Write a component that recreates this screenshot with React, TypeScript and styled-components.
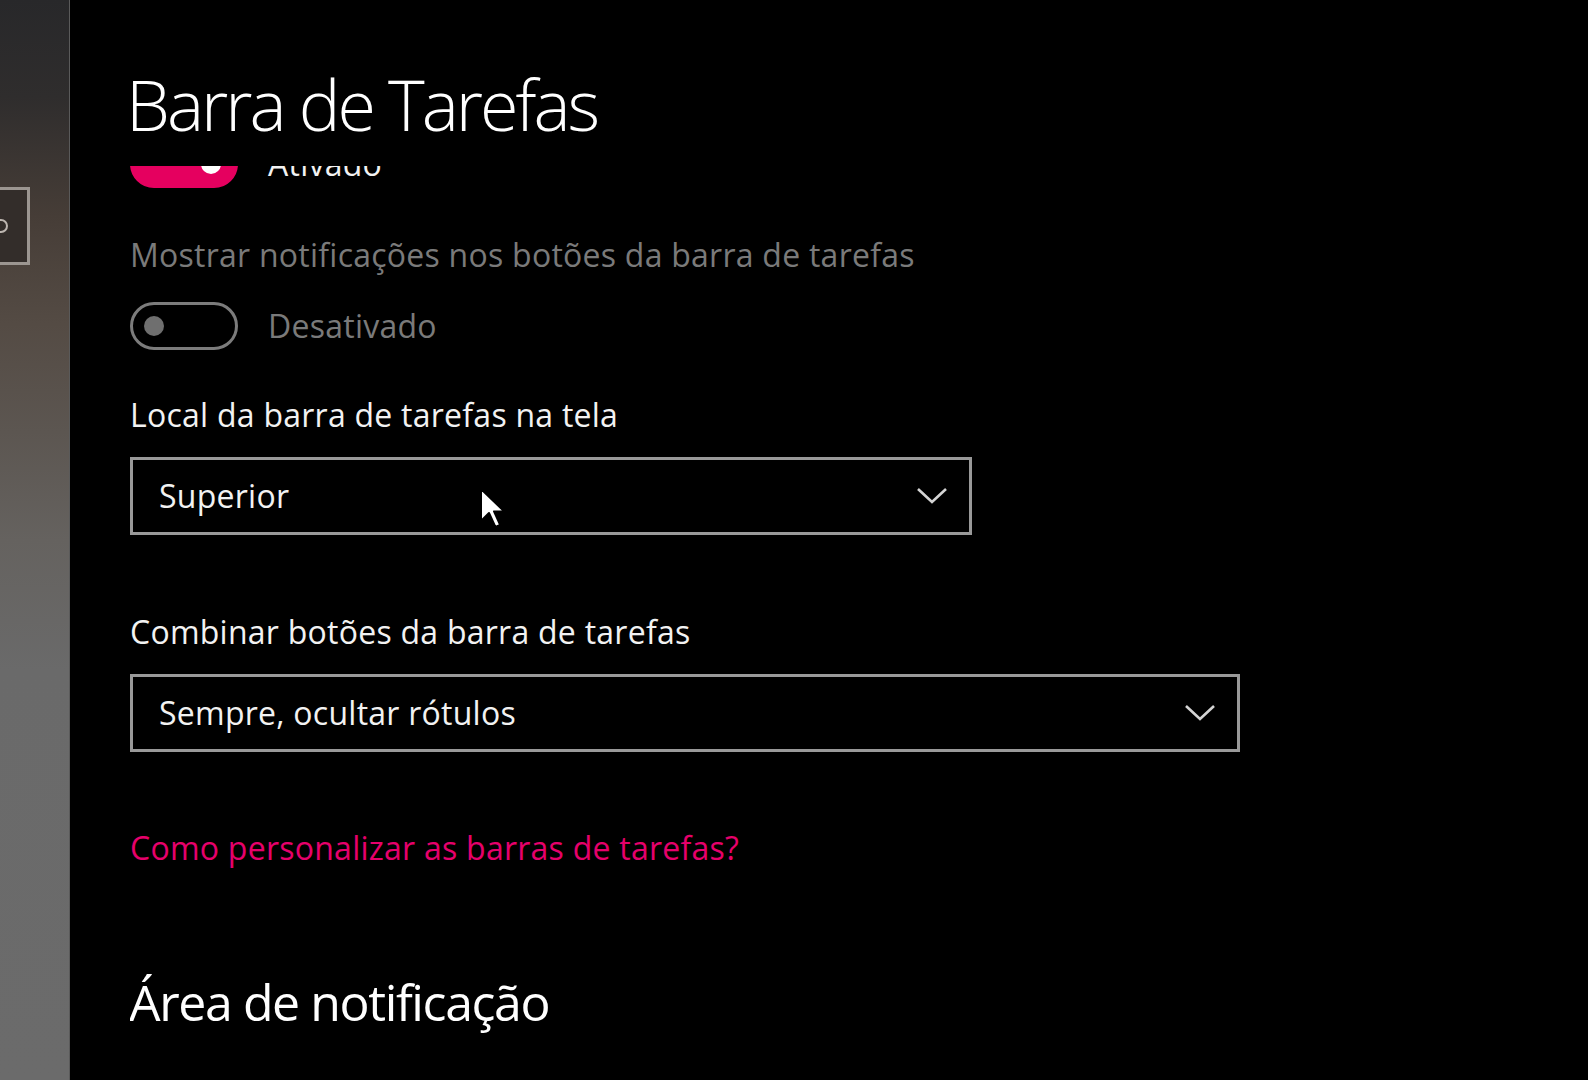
import React, { FC } from 'react';
import styled, { createGlobalStyle } from 'styled-components';

const GlobalStyle = createGlobalStyle`
  html, body {
    margin: 0;
    padding: 0;
    background: #000;
  }
  body {
    font-family: 'Open Sans', 'Noto Sans', sans-serif;
    color: #fff;
  }
`;

const PINK = '#e5005f';

const Page = styled.div`
  display: flex;
  width: 1588px;
  height: 1080px;
  overflow: hidden;
  background: #000;
`;

const Backdrop = styled.aside`
  width: 69px;
  flex-shrink: 0;
  display: flex;
  flex-direction: column;
  background: linear-gradient(
    180deg,
    #28282a 0%,
    #2f2d2d 9%,
    #463d37 20%,
    #544b44 30%,
    #5c5651 40%,
    #65625f 50%,
    #6a6a6a 62%,
    #6b6b6b 100%
  );
  border-right: 1px solid #5a5a5a;
`;

const SearchBox = styled.div`
  margin-top: 187px;
  margin-left: -40px;
  width: 70px;
  height: 78px;
  box-sizing: border-box;
  border: 3px solid #9c9691;
  background: #332d2a;
  display: flex;
  align-items: center;
  padding-left: 31px;
`;

const SearchGlyph = styled.span`
  width: 14px;
  height: 14px;
  box-sizing: border-box;
  border: 2px solid #bdb6b0;
  border-radius: 50%;
`;

const Main = styled.main`
  flex: 1;
  display: flex;
  flex-direction: column;
  padding-left: 60px;
  min-width: 0;
`;

const Header = styled.header`
  height: 166px;
  box-sizing: border-box;
  padding-top: 69px;
  flex-shrink: 0;
`;

const Title = styled.h1`
  margin: 0 0 0 -4px;
  font-size: 70px;
  line-height: 70px;
  font-weight: 300;
  letter-spacing: -3px;
  color: #fff;
`;

const Viewport = styled.div`
  flex: 1;
  overflow: hidden;
`;

// the list is scrolled a little, so the first switch slides under the header
const Scrolled = styled.div`
  margin-top: -26px;
  display: flex;
  flex-direction: column;
  align-items: flex-start;
`;

const Row = styled.div<{ $gap?: number }>`
  display: flex;
  align-items: center;
  gap: 30px;
  margin-top: ${(p) => p.$gap ?? 0}px;
`;

const Switch = styled.div<{ $on?: boolean }>`
  width: 108px;
  height: 48px;
  box-sizing: border-box;
  border-radius: 24px;
  display: flex;
  align-items: center;
  padding: 0 ${(p) => (p.$on ? 14 : 11)}px;
  justify-content: ${(p) => (p.$on ? 'flex-end' : 'flex-start')};
  background: ${(p) => (p.$on ? PINK : 'transparent')};
  border: 3px solid ${(p) => (p.$on ? PINK : '#7c7c7c')};
`;

const Knob = styled.span<{ $on?: boolean }>`
  width: 20px;
  height: 20px;
  border-radius: 50%;
  background: ${(p) => (p.$on ? '#fff' : '#6f6f6f')};
`;

const Text = styled.span<{ $muted?: boolean }>`
  font-size: 32px;
  line-height: 44px;
  letter-spacing: 0.25px;
  color: ${(p) => (p.$muted ? '#7a7a7a' : '#f2f2f2')};
  white-space: nowrap;
`;

const Label = styled(Text).attrs({ as: 'div' })<{ $gap?: number }>`
  margin-top: ${(p) => p.$gap ?? 0}px;
`;

const Select = styled.div<{ $width: number; $gap?: number }>`
  position: relative;
  width: ${(p) => p.$width}px;
  height: 78px;
  box-sizing: border-box;
  border: 3px solid #999;
  margin-top: ${(p) => p.$gap ?? 0}px;
  display: flex;
  align-items: center;
  justify-content: space-between;
  padding: 0 21px 0 26px;
`;

const Chevron = () => (
  <svg width="32" height="18" viewBox="0 0 32 18">
    <path d="M2 2 L16 15 L30 2" fill="none" stroke="#d4d4d4" strokeWidth="2.6" />
  </svg>
);

const Pointer = styled.svg`
  position: absolute;
  left: 346px;
  top: 27px;
`;

const Cursor = () => (
  <Pointer width="28" height="44" viewBox="0 0 14 22">
    <path
      d="M1 1 L1 17 L5 13 L8.2 20 L10.6 19 L7.5 12.2 L12.6 12.2 Z"
      fill="#fff"
      stroke="#000"
      strokeWidth="1"
      strokeLinejoin="round"
    />
  </Pointer>
);

const HelpLink = styled.a`
  margin-top: 74px;
  font-size: 32px;
  line-height: 44px;
  letter-spacing: 0.25px;
  color: #e6006b;
  text-decoration: none;
  white-space: nowrap;
`;

const SectionTitle = styled.h2`
  margin: 102px 0 0 -1px;
  font-size: 50px;
  line-height: 60px;
  font-weight: 400;
  letter-spacing: -1.4px;
  color: #fff;
  white-space: nowrap;
`;

const App: FC = () => (
  <Page>
    <GlobalStyle />
    <Backdrop>
      <SearchBox>
        <SearchGlyph />
      </SearchBox>
    </Backdrop>
    <Main>
      <Header>
        <Title>Barra de Tarefas</Title>
      </Header>
      <Viewport>
        <Scrolled>
          <Row>
            <Switch $on>
              <Knob $on />
            </Switch>
            <Text>Ativado</Text>
          </Row>

          <Label $muted $gap={45}>
            Mostrar notificações nos botões da barra de tarefas
          </Label>
          <Row $gap={25}>
            <Switch>
              <Knob />
            </Switch>
            <Text $muted>Desativado</Text>
          </Row>

          <Label $gap={43}>Local da barra de tarefas na tela</Label>
          <Select $width={842} $gap={20}>
            <Text>Superior</Text>
            <Chevron />
            <Cursor />
          </Select>

          <Label $gap={75}>Combinar botões da barra de tarefas</Label>
          <Select $width={1110} $gap={20}>
            <Text>Sempre, ocultar rótulos</Text>
            <Chevron />
          </Select>

          <HelpLink href="#">Como personalizar as barras de tarefas?</HelpLink>

          <SectionTitle>Área de notificação</SectionTitle>
        </Scrolled>
      </Viewport>
    </Main>
  </Page>
);

export default App;
